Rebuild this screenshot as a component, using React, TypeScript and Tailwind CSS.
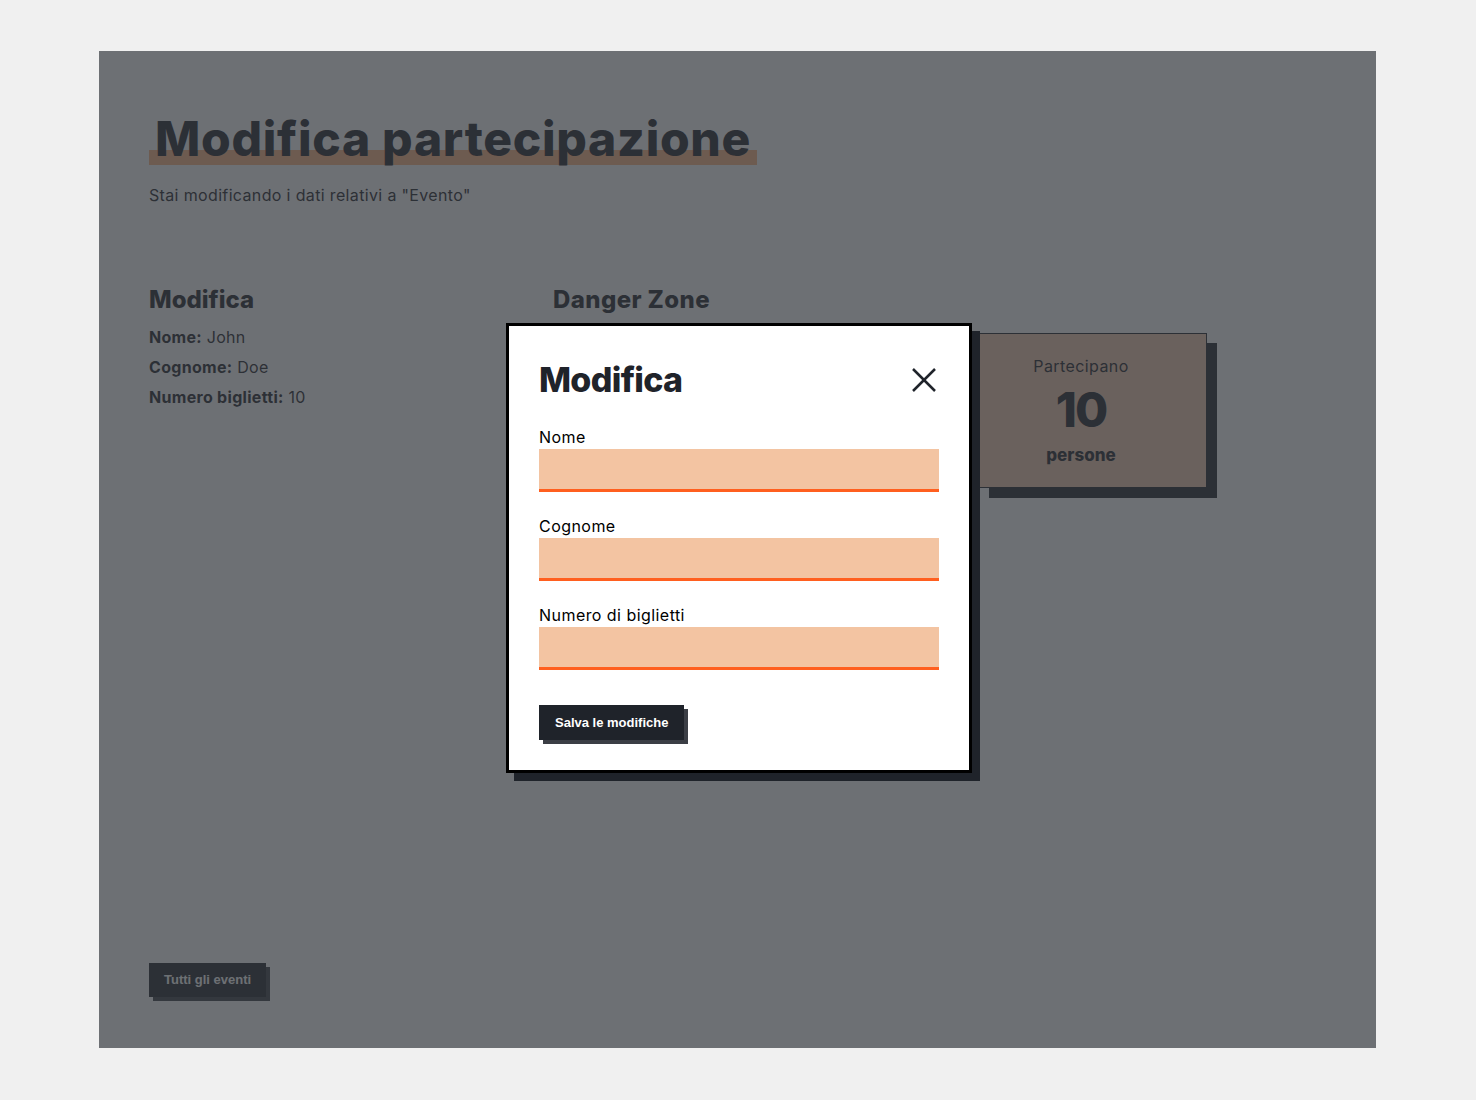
const fields = ['Nome', 'Cognome', 'Numero di biglietti'];

function EditModal() {
  return (
    <div className="w-[466px] bg-white border-[3px] border-black shadow-[8px_8px_0_#1f232a] px-[30px] pt-[30px] pb-[30px]">
      <div className="mt-[4px] mb-[26px] h-[40px] flex items-center justify-between">
        <h2 className="text-[34px] leading-[40px] font-extrabold text-[#1f232a] tracking-[-0.7px]">Modifica</h2>
        <button type="button" className="mr-[2px] text-[#1f232a]" aria-label="Chiudi">
          <svg width="26" height="26" viewBox="0 0 26 26" fill="none" stroke="currentColor" strokeWidth="2.5">
            <line x1="2" y1="2" x2="24" y2="24" />
            <line x1="24" y1="2" x2="2" y2="24" />
          </svg>
        </button>
      </div>

      <form className="flex flex-col gap-[23px]">
        {fields.map((f) => (
          <div key={f}>
            <label className="block text-[16px] leading-[22px] tracking-[0.45px] mb-px text-black">{f}</label>
            <input
              type="text"
              className="block w-full h-[43px] bg-[#f3c4a2] border-b-[3px] border-[#ff5f1f] outline-none px-3"
            />
          </div>
        ))}
      </form>

      <button
        type="button"
        className="mt-[35px] h-[35px] px-[16px] bg-[#1f232a] text-white text-[13px] font-bold font-['Liberation_Sans',Arial,sans-serif] shadow-[4px_4px_0_#3b3e45]"
      >
        Salva le modifiche
      </button>
    </div>
  );
}

export default function App() {
  return (
    <div className="min-h-[1100px] bg-[#f0f0f0] pt-[51px] font-[Inter,sans-serif] text-[#1f232a]">
      <div className="relative ml-[99px] w-[1277px] h-[997px] bg-white flex flex-col pl-[50px] pt-[64px] pb-[51px]">
        <div>
          <h1 className="relative isolate inline-block px-[6px] text-[48px] leading-none font-extrabold tracking-[0.7px]">
            <span className="absolute left-0 right-0 bottom-[-2px] h-[15px] bg-[#ffb685] -z-10" />
            Modifica partecipazione
          </h1>
        </div>
        <p className="mt-5 text-base leading-6 tracking-[0.35px]">Stai modificando i dati relativi a "Evento"</p>

        <div className="mt-[77px] flex">
          <div className="w-[404px]">
            <h3 className="text-2xl leading-8 font-extrabold">Modifica</h3>
            <div className="mt-[9px] flex flex-col gap-[6px] text-base leading-6 tracking-[0.3px]">
              <p><span className="font-bold">Nome:</span> John</p>
              <p><span className="font-bold">Cognome:</span> Doe</p>
              <p><span className="font-bold">Numero biglietti:</span> 10</p>
            </div>
          </div>
          <div>
            <h3 className="text-2xl leading-8 font-extrabold tracking-[0.4px]">Danger Zone</h3>
            <div className="mt-[17px] ml-[426px] w-[228px] h-[155px] bg-[#f5cbaf] border border-[#1f232a] shadow-[10px_10px_0_#1f232a] flex flex-col items-center pt-[20px] pr-[24px]">
              <span className="text-base leading-6 tracking-[0.4px]">Partecipano</span>
              <span className="mt-[8px] text-[48px] leading-none font-extrabold tracking-[-2px]">10</span>
              <span className="mt-[9px] text-[17px] leading-6 font-extrabold">persone</span>
            </div>
          </div>
        </div>

        <div className="mt-auto">
          <button
            type="button"
            className="h-[34px] px-[15px] bg-[#1f232a] text-white text-[13px] font-bold font-['Liberation_Sans',Arial,sans-serif] shadow-[4px_4px_0_#3b3e45]"
          >
            Tutti gli eventi
          </button>
        </div>

        <div className="absolute inset-0 bg-[#32353b]/[0.71] flex items-center justify-center pl-[3px] pb-[3px]">
          <EditModal />
        </div>
      </div>
    </div>
  );
}
